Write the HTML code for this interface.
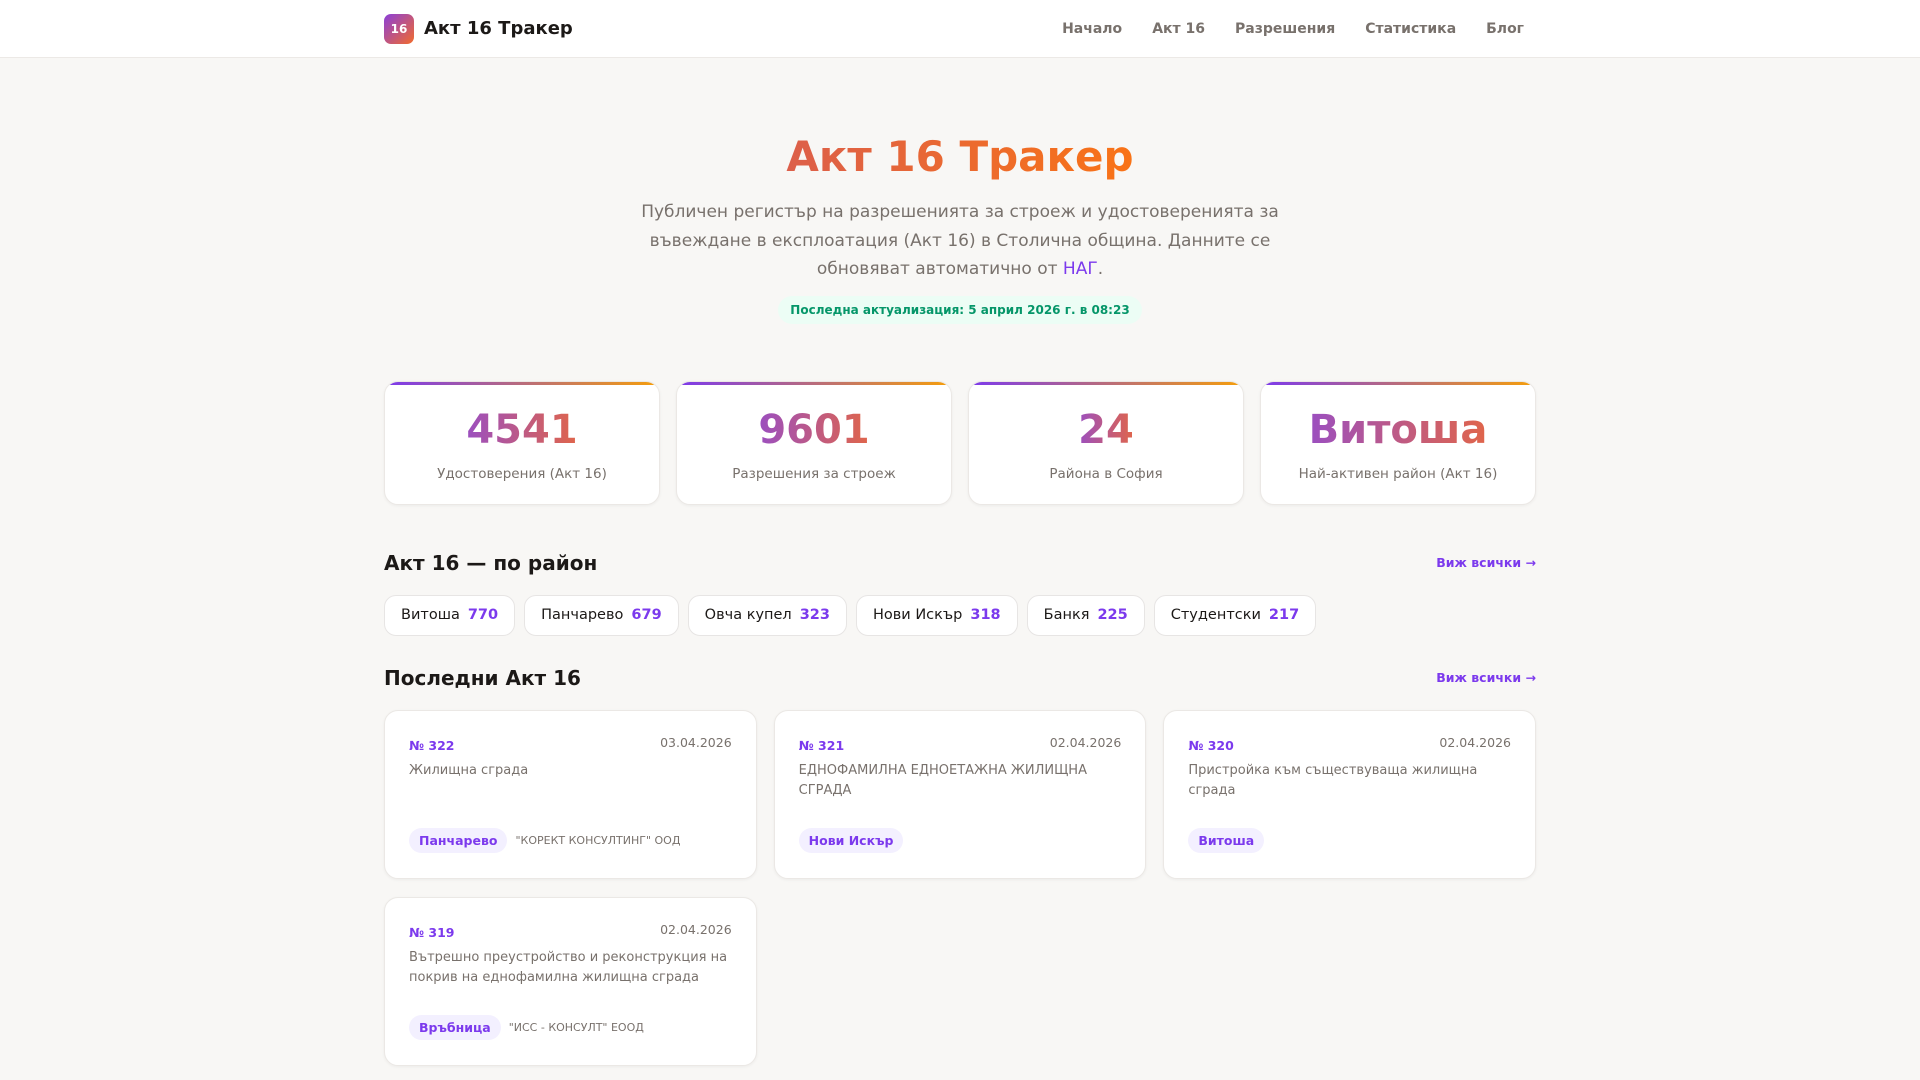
<!DOCTYPE html>
<html><head><meta charset="utf-8"><style>
*{box-sizing:border-box;margin:0;padding:0}
body{width:1920px;height:1080px;overflow:hidden;background:#f8f7f5;font-family:"DejaVu Sans","Liberation Sans",sans-serif;color:#1c1917}
.nav{height:58px;background:#fff;border-bottom:1px solid #ece9e6}
.wrap{width:1152px;margin:0 auto;position:relative}
.nav .wrap{display:flex;align-items:center;height:57px}
.logo{width:30px;height:30px;border-radius:7px;background:linear-gradient(135deg,#8b3fd9,#f26b2c);color:#fff;font-size:12px;font-weight:bold;display:flex;align-items:center;justify-content:center}
.brand{font-size:18px;font-weight:bold;margin-left:10px}
.links{margin-left:auto;display:flex;gap:30px;font-size:14px;font-weight:bold;color:#78716c;margin-right:12px}
h1{text-align:center;font-size:42px;font-weight:bold;margin-top:74px;background:linear-gradient(90deg,#dc5f4a,#f97316);-webkit-background-clip:text;color:transparent;display:block;width:max-content;margin-left:auto;margin-right:auto;line-height:50px}
.lead{width:640px;margin:16px auto 0;text-align:center;font-size:17px;line-height:28.6px;color:#78716c}
.lead a{color:#7c3aed;text-decoration:none}
.badge{width:max-content;margin:12px auto 0;background:#ecfdf5;color:#059669;font-size:12px;font-weight:bold;padding:7px 12px;border-radius:14px}
.stats{display:grid;grid-template-columns:repeat(4,1fr);gap:16px;margin-top:57px}
.stat{background:#fff;border-radius:14px;height:124px;border:1px solid #ebe8e5;box-shadow:0 1px 3px rgba(0,0,0,.05);position:relative;overflow:hidden;text-align:center}
.stat:before{content:"";position:absolute;left:0;right:0;top:0;height:3px;background:linear-gradient(90deg,#7c3aed,#f59e0b)}
.num{font-size:40px;font-weight:bold;margin-top:24px;line-height:48px;background:linear-gradient(90deg,#9b4fc0,#e0654a);-webkit-background-clip:text;color:transparent;display:inline-block}
.lbl{font-size:13.5px;color:#78716c;margin-top:12px}
.sec{display:flex;justify-content:space-between;align-items:center}
.sec h2{font-size:20px;font-weight:bold}
.sec a{font-size:12.5px;font-weight:bold;color:#7c3aed}
.chips{display:flex;gap:9px;margin-top:20px}
.chip{background:#fff;border:1px solid #e7e5e4;border-radius:12px;height:41px;padding:0 16px;display:flex;align-items:center;font-size:14.5px}
.chip b{color:#7c3aed;margin-left:8px}
.cards{display:grid;grid-template-columns:repeat(3,1fr);gap:18px 17px;margin-top:20px}
.card{background:#fff;border:1px solid #ebe8e5;border-radius:14px;height:169px;padding:24px;position:relative;box-shadow:0 1px 3px rgba(0,0,0,.05)}
.top{display:flex;justify-content:space-between;font-size:12.5px;color:#78716c}
.top b{color:#7c3aed;font-size:12.5px;margin-top:3px}
.desc{font-size:13px;line-height:20px;color:#78716c;margin-top:8px}
.foot{position:absolute;left:24px;bottom:25px;display:flex;align-items:center;font-size:11px;color:#78716c}
.tag{background:#f3f0ff;color:#7c3aed;font-weight:bold;font-size:12.5px;border-radius:13px;padding:5px 10px;margin-right:8px}
</style></head><body>
<div class="nav"><div class="wrap"><div class="logo">16</div><div class="brand">Акт 16 Тракер</div>
<div class="links"><span>Начало</span><span>Акт 16</span><span>Разрешения</span><span>Статистика</span><span>Блог</span></div></div></div>
<div class="wrap">
<h1>Акт 16 Тракер</h1>
<p class="lead">Публичен регистър на разрешенията за строеж и удостоверенията за<br>въвеждане в експлоатация (Акт 16) в Столична община. Данните се<br>обновяват автоматично от <a>НАГ</a>.</p>
<div class="badge">Последна актуализация: 5 април 2026 г. в 08:23</div>
<div class="stats">
<div class="stat"><div class="num">4541</div><div class="lbl">Удостоверения (Акт 16)</div></div>
<div class="stat"><div class="num">9601</div><div class="lbl">Разрешения за строеж</div></div>
<div class="stat"><div class="num">24</div><div class="lbl">Района в София</div></div>
<div class="stat"><div class="num">Витоша</div><div class="lbl">Най-активен район (Акт 16)</div></div>
</div>
<div class="sec" style="margin-top:46px"><h2>Акт 16 — по район</h2><a>Виж всички →</a></div>
<div class="chips">
<div class="chip">Витоша<b>770</b></div><div class="chip">Панчарево<b>679</b></div><div class="chip">Овча купел<b>323</b></div><div class="chip">Нови Искър<b>318</b></div><div class="chip">Банкя<b>225</b></div><div class="chip">Студентски<b>217</b></div>
</div>
<div class="sec" style="margin-top:30px"><h2>Последни Акт 16</h2><a>Виж всички →</a></div>
<div class="cards">
<div class="card"><div class="top"><b>№ 322</b><span>03.04.2026</span></div><div class="desc">Жилищна сграда</div><div class="foot"><span class="tag">Панчарево</span>"КОРЕКТ КОНСУЛТИНГ" ООД</div></div>
<div class="card"><div class="top"><b>№ 321</b><span>02.04.2026</span></div><div class="desc">ЕДНОФАМИЛНА ЕДНОЕТАЖНА ЖИЛИЩНА СГРАДА</div><div class="foot"><span class="tag">Нови Искър</span></div></div>
<div class="card"><div class="top"><b>№ 320</b><span>02.04.2026</span></div><div class="desc">Пристройка към съществуваща жилищна сграда</div><div class="foot"><span class="tag">Витоша</span></div></div>
<div class="card"><div class="top"><b>№ 319</b><span>02.04.2026</span></div><div class="desc">Вътрешно преустройство и реконструкция на покрив на еднофамилна жилищна сграда</div><div class="foot"><span class="tag">Връбница</span>"ИСС - КОНСУЛТ" ЕООД</div></div>
</div>
</div>
</body></html>
